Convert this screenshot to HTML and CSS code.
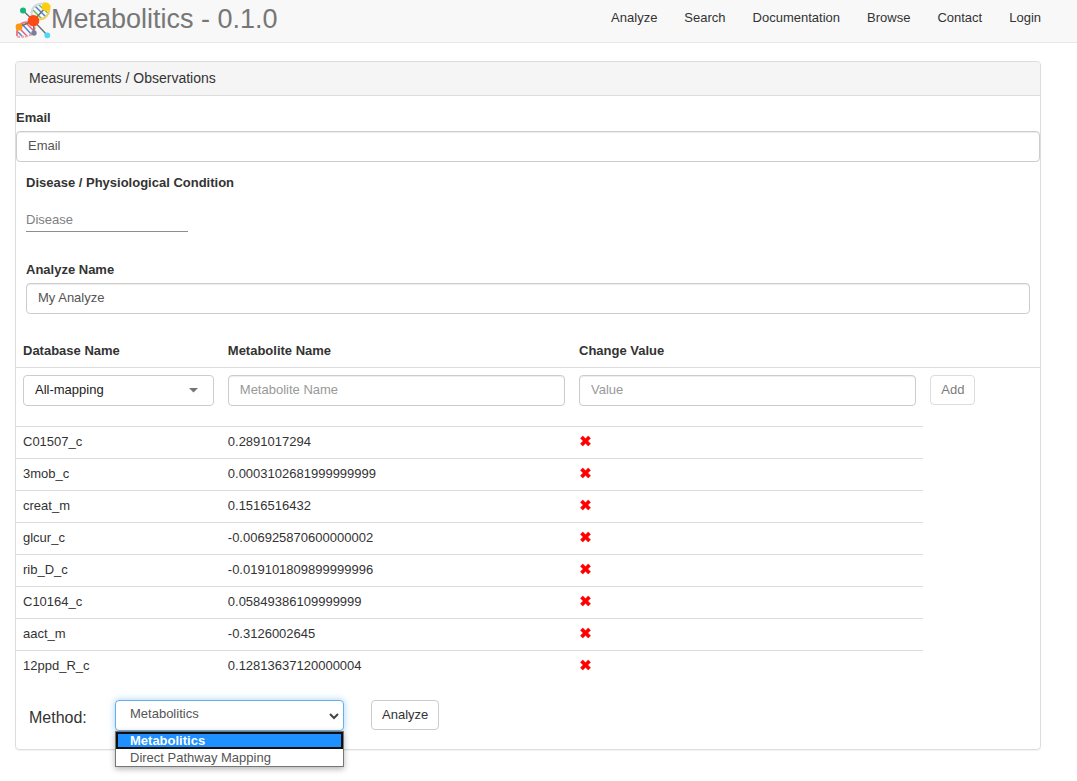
FILE: index.html
```html
<!DOCTYPE html>
<html lang="en">
<head>
<meta charset="utf-8">
<meta name="viewport" content="width=device-width, initial-scale=1">
<title>Metabolitics</title>
<link rel="stylesheet" href="styles.css">
</head>
<body>
<svg class="sprite" aria-hidden="true">
  <symbol id="cross" viewBox="0 0 12 12"><path d="M3.3 1 6 3.7 8.7 1 11 3.3 8.3 6 11 8.7 8.7 11 6 8.3 3.3 11 1 8.7 3.7 6 1 3.3Z" fill="#f00" stroke="#f00" stroke-width=".6" stroke-linejoin="round"/></symbol>
</svg>
<header class="navbar">
  <a class="brand" href="#">
    <svg class="logo" viewBox="0 0 36 38" aria-hidden="true">
      <g fill="none" stroke-width="1.5">
        <path d="M18 9 27 18" stroke="#6cc04a"/>
        <path d="M20 5 31 16" stroke="#4a86d8"/>
        <path d="M24 4 34 13" stroke="#6cc04a"/>
        <path d="M7 23 17 34" stroke="#4a86d8"/>
        <path d="M4 27 12 35" stroke="#e05a80"/>
        <path d="M11 22 19 30" stroke="#ef5a78"/>
        <path d="M3 31 7 35" stroke="#4a86d8"/>
      </g>
      <g fill="none" stroke-width="2">
        <path d="M17 16C15 7 20 2 30 2.5" stroke="#d4d5de"/>
        <path d="M20 18C30 20 35 14 34.5 4" stroke="#f0cf62"/>
        <path d="M2 35C1 26 6 19 16 22" stroke="#f07878"/>
        <path d="M2 35.5C14 37 21 33 20 22" stroke="#f4a0a0" stroke-dasharray="3 1"/>
      </g>
      <path d="M8 9.5 18.5 19.7 32 34M18.5 19.7 31 6M18.5 19.7 4 26M18.5 19.7 19 32" fill="none" stroke="#6b6f7c" stroke-width="1.4"/>
      <circle cx="8" cy="9.5" r="3" fill="#16b978"/>
      <circle cx="31" cy="5.7" r="4.3" fill="#ffcd0a"/>
      <circle cx="18.5" cy="19.7" r="5.8" fill="#fb4a16"/>
      <circle cx="4" cy="26" r="3.4" fill="#ff9811"/>
      <circle cx="19" cy="32" r="2.7" fill="#7d7f92"/>
      <circle cx="32.3" cy="34.3" r="2.9" fill="#4cd8fb"/>
    </svg>
    <span>Metabolitics - 0.1.0</span>
  </a>
  <nav class="menu">
    <a href="#">Analyze</a>
    <a href="#">Search</a>
    <a href="#">Documentation</a>
    <a href="#">Browse</a>
    <a href="#">Contact</a>
    <a href="#">Login</a>
  </nav>
</header>
<main class="panel">
  <h1 class="panel-heading">Measurements / Observations</h1>
  <div class="field">
    <label for="email">Email</label>
    <input class="control filled" id="email" type="text" placeholder="Email">
  </div>
  <div class="field inset">
    <label for="disease">Disease / Physiological Condition</label>
    <input class="underlined" id="disease" type="text" placeholder="Disease">
  </div>
  <div class="field inset name">
    <label for="name">Analyze Name</label>
    <input class="control" id="name" type="text" value="My Analyze">
  </div>
  <table class="measures">
    <colgroup><col class="col-db"><col class="col-wide"><col class="col-wide"><col></colgroup>
    <thead>
      <tr><th scope="col">Database Name</th><th scope="col">Metabolite Name</th><th scope="col">Change Value</th><th></th></tr>
    </thead>
    <tbody>
      <tr class="entry">
        <td>
          <div class="select">
            <select class="control dark" aria-label="Database Name"><option>All-mapping</option></select>
            <svg class="caret" viewBox="0 0 10 5" aria-hidden="true"><path d="M0 0H9L4.5 4.5Z" fill="#757575"/></svg>
          </div>
        </td>
        <td><input class="control" type="text" placeholder="Metabolite Name" aria-label="Metabolite Name"></td>
        <td><input class="control" type="text" placeholder="Value" aria-label="Change Value"></td>
        <td><button class="btn" type="button" disabled>Add</button></td>
      </tr>
      <tr><td>C01507_c</td><td>0.2891017294</td><td><button class="remove" type="button" aria-label="Remove"><svg><use href="#cross"/></svg></button></td></tr>
      <tr><td>3mob_c</td><td>0.0003102681999999999</td><td><button class="remove" type="button" aria-label="Remove"><svg><use href="#cross"/></svg></button></td></tr>
      <tr><td>creat_m</td><td>0.1516516432</td><td><button class="remove" type="button" aria-label="Remove"><svg><use href="#cross"/></svg></button></td></tr>
      <tr><td>glcur_c</td><td>-0.006925870600000002</td><td><button class="remove" type="button" aria-label="Remove"><svg><use href="#cross"/></svg></button></td></tr>
      <tr><td>rib_D_c</td><td>-0.019101809899999996</td><td><button class="remove" type="button" aria-label="Remove"><svg><use href="#cross"/></svg></button></td></tr>
      <tr><td>C10164_c</td><td>0.05849386109999999</td><td><button class="remove" type="button" aria-label="Remove"><svg><use href="#cross"/></svg></button></td></tr>
      <tr><td>aact_m</td><td>-0.3126002645</td><td><button class="remove" type="button" aria-label="Remove"><svg><use href="#cross"/></svg></button></td></tr>
      <tr><td>12ppd_R_c</td><td>0.12813637120000004</td><td><button class="remove" type="button" aria-label="Remove"><svg><use href="#cross"/></svg></button></td></tr>
    </tbody>
  </table>
  <div class="actions">
    <label class="method-label" for="method">Method:</label>
    <div class="select method">
      <select class="control active" id="method"><option>Metabolitics</option><option>Direct Pathway Mapping</option></select>
      <svg class="chevron" viewBox="0 0 10 7" aria-hidden="true"><path d="M1 1 5 5 9 1" fill="none" stroke="#444" stroke-width="2"/></svg>
      <ul class="options" role="listbox" aria-label="Method">
        <li class="chosen" role="option" aria-selected="true">Metabolitics</li>
        <li role="option" aria-selected="false">Direct Pathway Mapping</li>
      </ul>
    </div>
    <button class="btn" type="button">Analyze</button>
  </div>
</main>
</body>
</html>
```

FILE: styles.css
```css
* { box-sizing: border-box; }

body {
  margin: 0;
  background: #fff;
  color: #333;
  font-family: "Liberation Sans", Arial, sans-serif;
  font-size: 13px;
  line-height: 18px;
}

input, select, button { font: inherit; color: inherit; }

.sprite { display: none; }

.navbar {
  display: flex;
  justify-content: space-between;
  height: 43px;
  padding: 0 36px 0 15px;
  background: #f8f8f8;
  border-bottom: 1px solid #e7e7e7;
}

.brand {
  display: flex;
  color: #777;
  font-size: 27px;
  line-height: 38px;
  text-decoration: none;
}

.logo {
  width: 36px;
  height: 38px;
  margin-top: 1px;
}

.menu {
  display: flex;
  gap: 27px;
  padding-top: 9px;
}

.menu a {
  color: #333;
  text-decoration: none;
}

.panel {
  margin: 18px 36px 30px 15px;
  padding-bottom: 18px;
  border: 1px solid #ddd;
  border-radius: 4px;
  box-shadow: 0 1px 1px rgba(0, 0, 0, 0.05);
}

.panel-heading {
  margin: 0;
  padding: 7px 13px 8px;
  background: #f5f5f5;
  border-bottom: 1px solid #ddd;
  border-radius: 3px 3px 0 0;
  font-size: 14px;
  font-weight: 400;
}

.field { padding-top: 13px; }

.field label {
  display: block;
  margin-bottom: 4px;
  font-weight: 700;
}

.inset { padding: 12px 10px 0; }

.name { padding-top: 29px; }

.control {
  display: block;
  width: 100%;
  height: 31px;
  padding: 4px 11px 6px;
  background: #fff;
  border: 1px solid #ccc;
  border-radius: 4px;
  box-shadow: inset 0 1px 1px rgba(0, 0, 0, 0.075);
  color: #555;
  appearance: none;
}

.control::placeholder { color: #999; }

.filled::placeholder { color: #555; }

.dark {
  box-shadow: none;
  color: #222;
}

.underlined {
  display: block;
  width: 162px;
  height: 23px;
  margin-top: 17px;
  padding: 1px 0 3px;
  border: 0;
  border-bottom: 1px solid #8e8e8e;
}

.underlined::placeholder { color: #808080; }

.measures {
  width: 100%;
  margin-top: 19px;
  border-collapse: collapse;
  table-layout: fixed;
}

.col-db { width: 20%; }

.col-wide { width: 34.3%; }

.measures th {
  padding: 9px 7px 7px;
  text-align: left;
}

.measures td {
  height: 32px;
  padding: 6px 7px 7px;
  border-top: 1px solid #ddd;
}

.measures .entry td {
  padding: 7px 7px 20px;
  vertical-align: top;
}

.btn {
  height: 30px;
  padding: 5px 10px;
  background: #fff;
  border: 1px solid #ccc;
  border-radius: 4px;
}

.btn:disabled { opacity: 0.65; }

.remove {
  display: block;
  padding: 0 0 3px;
  background: none;
  border: 0;
}

.remove svg {
  display: block;
  width: 13px;
  height: 12px;
}

.select { position: relative; }

.caret {
  position: absolute;
  top: 13px;
  right: 15px;
  width: 10px;
  height: 5px;
}

.chevron {
  position: absolute;
  top: 13px;
  right: 5px;
  width: 10px;
  height: 7px;
}

.actions {
  display: flex;
  align-items: flex-start;
  padding: 17px 13px 0;
}

.method-label {
  width: 86px;
  padding-top: 9px;
  font-size: 16px;
}

.method {
  width: 229px;
  margin-right: 27px;
}

.active {
  padding-left: 14px;
  border-color: #66afe9;
  box-shadow: 0 0 7px rgba(102, 175, 233, 0.6);
}

.options {
  position: absolute;
  top: 100%;
  left: 0;
  right: 0;
  margin: 0;
  padding: 0;
  list-style: none;
  background: #fff;
  border: 1px solid #767676;
  box-shadow: 0 2px 6px rgba(0, 0, 0, 0.3);
  color: #555;
  line-height: 17px;
}

.options li { padding: 0 14px; }

.options .chosen {
  padding: 0 12px;
  background: #1e90ff;
  border: 2px solid #101010;
  color: #fff;
  font-weight: 700;
  line-height: 13px;
}
```
